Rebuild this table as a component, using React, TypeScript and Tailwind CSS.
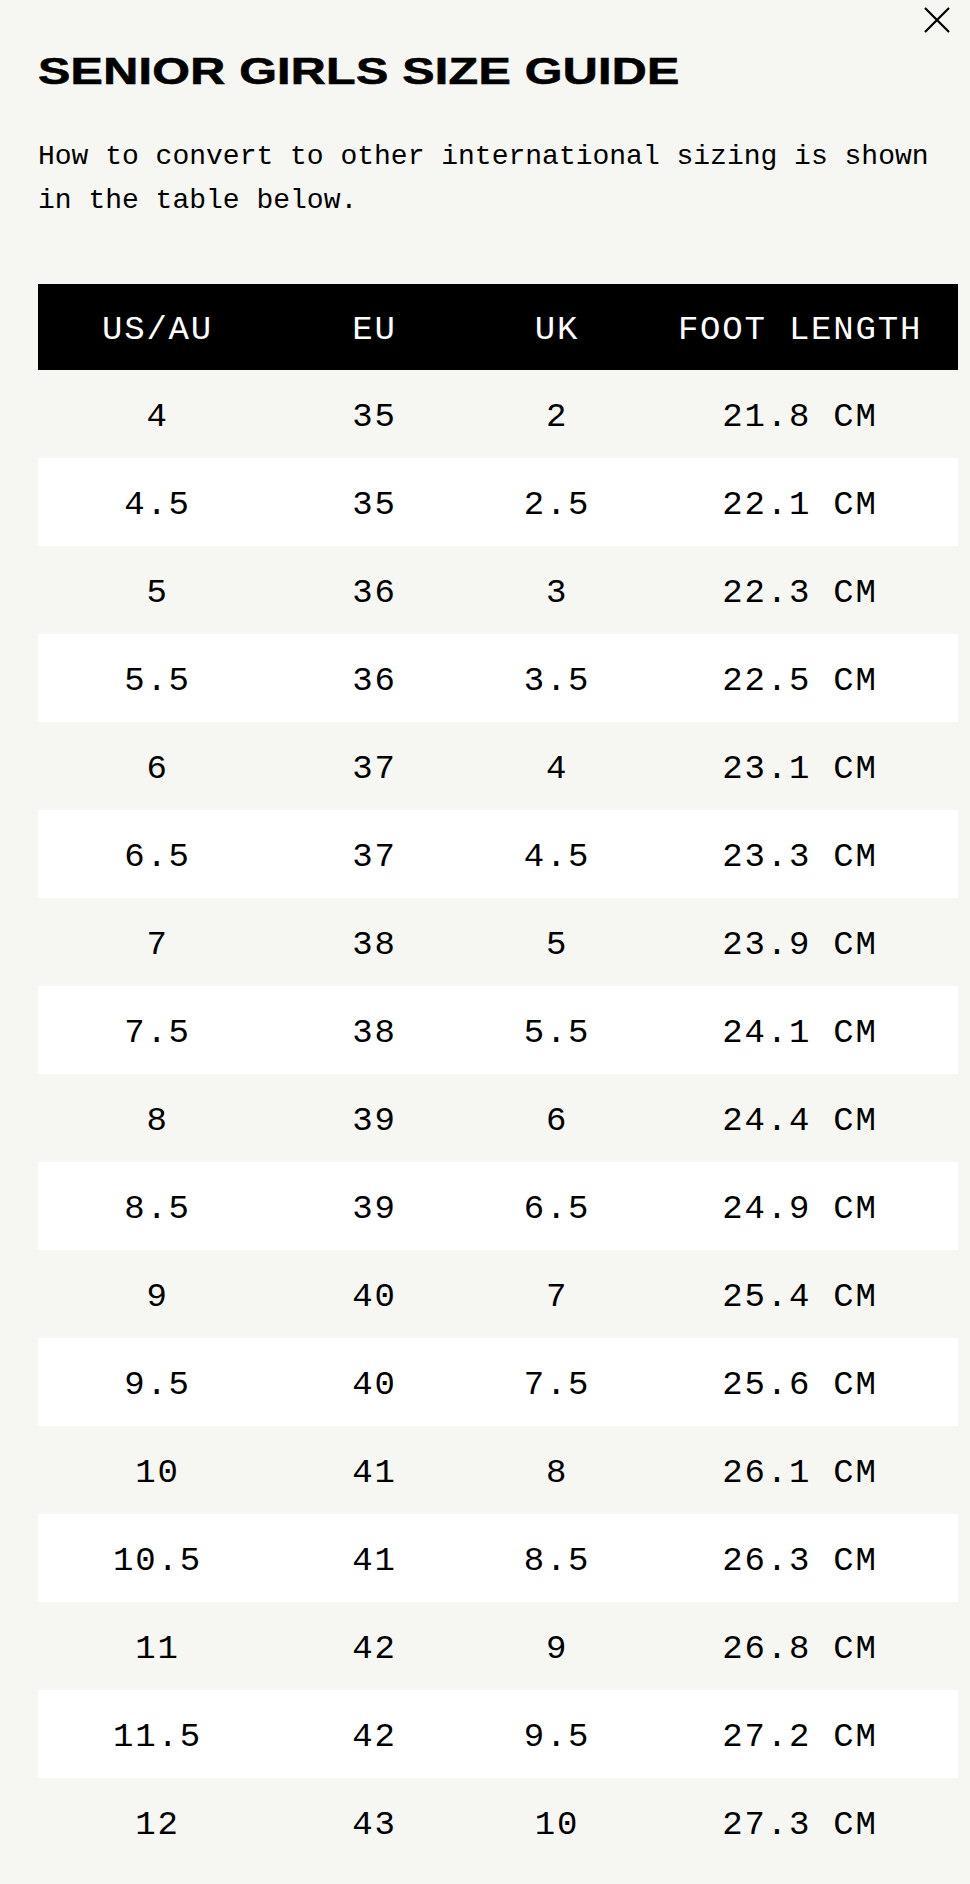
import React from "react";

const rows: [string, string, string, string][] = [
  ["4", "35", "2", "21.8 CM"],
  ["4.5", "35", "2.5", "22.1 CM"],
  ["5", "36", "3", "22.3 CM"],
  ["5.5", "36", "3.5", "22.5 CM"],
  ["6", "37", "4", "23.1 CM"],
  ["6.5", "37", "4.5", "23.3 CM"],
  ["7", "38", "5", "23.9 CM"],
  ["7.5", "38", "5.5", "24.1 CM"],
  ["8", "39", "6", "24.4 CM"],
  ["8.5", "39", "6.5", "24.9 CM"],
  ["9", "40", "7", "25.4 CM"],
  ["9.5", "40", "7.5", "25.6 CM"],
  ["10", "41", "8", "26.1 CM"],
  ["10.5", "41", "8.5", "26.3 CM"],
  ["11", "42", "9", "26.8 CM"],
  ["11.5", "42", "9.5", "27.2 CM"],
  ["12", "43", "10", "27.3 CM"],
];

const headers = ["US/AU", "EU", "UK", "FOOT LENGTH"];

export default function App() {
  return (
    <div className="relative min-h-[1884px] w-full overflow-hidden bg-[#f6f6f2] text-black">
      <button
        aria-label="Close"
        className="absolute right-[19px] top-[6px] flex h-[28px] w-[28px] items-center justify-center"
      >
        <svg width="28" height="28" viewBox="0 0 28 28" fill="none">
          <path d="M2 2 L26 26 M26 2 L2 26" stroke="#000" strokeWidth="2.2" />
        </svg>
      </button>
      <div className="flex flex-col pl-[38px] pr-[12px] pt-[53px]">
        <h1 className="w-fit self-start origin-left scale-x-[1.31] font-['Liberation_Sans',Arial,sans-serif] text-[37px] font-bold leading-[37px] tracking-[0.2px] whitespace-nowrap [-webkit-text-stroke:0.6px_#000]">
          SENIOR GIRLS SIZE GUIDE
        </h1>
        <p className="mt-[45px] w-[920px] font-['Liberation_Mono','Courier_New',monospace] text-[28px] leading-[44px]">
          How to convert to other international sizing is shown in the table below.
        </p>
        <div className="mt-[61px] w-[920px] font-['Liberation_Mono','Courier_New',monospace] text-[34px] tracking-[1.8px]">
          <div className="grid h-[86px] grid-cols-[239px_195px_170px_316px] items-center bg-black pt-[7px] text-white">
            {headers.map((h) => (
              <div key={h} className="text-center whitespace-nowrap">
                {h}
              </div>
            ))}
          </div>
          {rows.map((r, i) => (
            <div
              key={i}
              className={
                i % 2 === 1
                  ? "grid h-[88px] grid-cols-[239px_195px_170px_316px] items-center bg-white pt-[7px]"
                  : "grid h-[88px] grid-cols-[239px_195px_170px_316px] items-center pt-[7px]"
              }
            >
              {r.map((c, j) => (
                <div key={j} className="text-center whitespace-nowrap">
                  {c}
                </div>
              ))}
            </div>
          ))}
        </div>
      </div>
    </div>
  );
}
